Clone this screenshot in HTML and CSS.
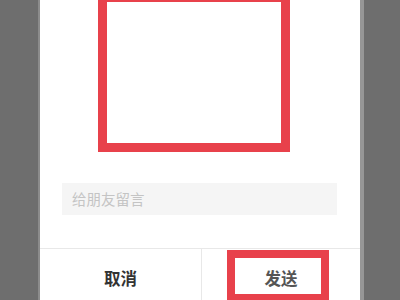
FILE: index.html
```html
<!DOCTYPE html>
<html lang="zh">
<head>
<meta charset="utf-8">
<link rel="stylesheet" href="styles.css">
</head>
<body>
<div class="screen">
  <div class="side side-left"></div>
  <div class="dialog">
    <div class="preview"></div>
    <div class="message">给朋友留言</div>
    <div class="actions">
      <div class="btn btn-cancel">取消</div>
      <div class="btn btn-send">发送<span class="mark"></span></div>
    </div>
  </div>
  <div class="side side-right"></div>
</div>
</body>
</html>
```
FILE: styles.css
```css
html, body {
  margin: 0;
  padding: 0;
  width: 400px;
  height: 300px;
  overflow: hidden;
  background: #6e6e6e;
  font-family: "Noto Sans CJK SC", "Noto Sans", sans-serif;
}
.screen {
  display: flex;
  width: 400px;
  height: 300px;
}
.side {
  width: 40px;
  flex: none;
  background: #6e6e6e;
}
.side-left {
  box-shadow: inset -2px 0 0 #8c8c8c;
}
.side-right {
  box-shadow: inset 4px 0 0 #969696;
}
.dialog {
  width: 320px;
  flex: none;
  background: #ffffff;
  display: flex;
  flex-direction: column;
}
.preview {
  margin: -7px 0 0 58px;
  width: 192px;
  height: 159px;
  box-sizing: border-box;
  border: 9px solid #e8414b;
  background: #fff;
  flex: none;
}
.message {
  margin: 31px 0 0 22px;
  width: 275px;
  height: 32px;
  box-sizing: border-box;
  padding-left: 10px;
  background: #f5f5f5;
  color: #c4c4c4;
  font-size: 14.5px;
  line-height: 32px;
  flex: none;
}
.actions {
  margin-top: 33px;
  border-top: 1px solid #e8e8e8;
  display: flex;
  height: 58px;
  flex: none;
}
.btn {
  position: relative;
  display: flex;
  align-items: center;
  justify-content: center;
  font-size: 16.5px;
  font-weight: bold;
}
.btn-cancel {
  width: 161px;
  border-right: 1px solid #e8e8e8;
  color: #333;
}
.btn-send {
  flex: 1;
  color: #555;
}
.mark {
  position: absolute;
  left: 25px;
  top: 1px;
  width: 102px;
  height: 52px;
  box-sizing: border-box;
  border: 8px solid #e8414b;
}
```
